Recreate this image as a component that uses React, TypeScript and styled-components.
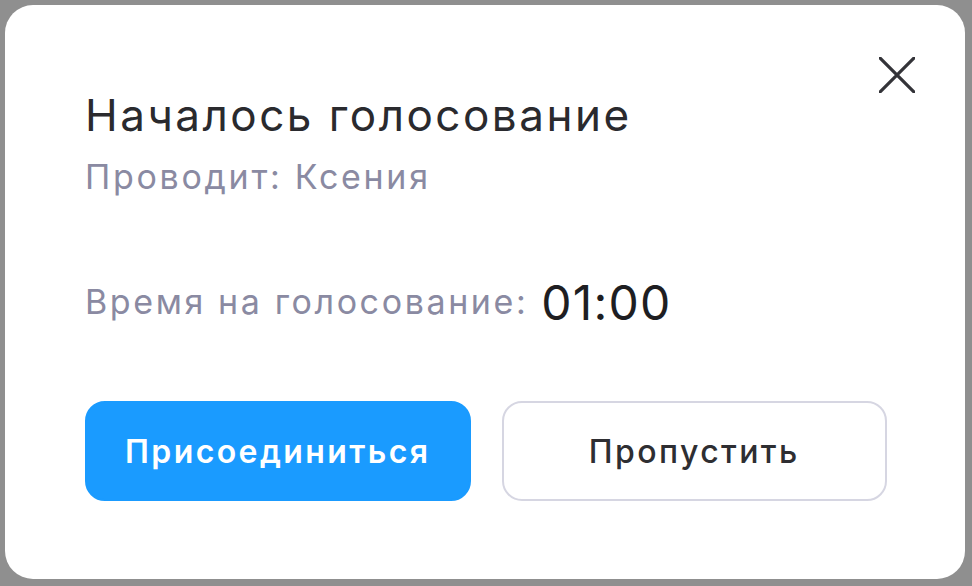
import React from 'react';
import styled, { createGlobalStyle } from 'styled-components';

const GlobalStyle = createGlobalStyle`
  html, body {
    margin: 0;
    padding: 0;
    background: #8f8f8f;
  }
  body {
    font-family: Inter, 'Noto Sans', sans-serif;
  }
  * {
    box-sizing: border-box;
  }
`;

const Backdrop = styled.div`
  width: 972px;
  height: 586px;
  padding: 5px 7px 7px 5px;
`;

const Card = styled.div`
  position: relative;
  display: flex;
  flex-direction: column;
  width: 960px;
  height: 574px;
  padding: 84px 78px 78px 80px;
  border-radius: 28px;
  background: #fff;
`;

const CloseButton = styled.button`
  position: absolute;
  top: 46px;
  right: 44px;
  width: 48px;
  height: 48px;
  padding: 0;
  border: none;
  background: transparent;
  display: flex;
  align-items: center;
  justify-content: center;
  cursor: pointer;
`;

const Title = styled.h2`
  margin: 0;
  font-size: 44px;
  line-height: 52px;
  font-weight: 400;
  letter-spacing: 2.5px;
  color: #2a2a2e;
`;

const Subtitle = styled.div`
  margin-top: 16px;
  font-size: 34px;
  line-height: 40px;
  letter-spacing: 2.7px;
  color: #8a8aa2;
`;

const TimeRow = styled.div`
  display: flex;
  align-items: center;
  gap: 13px;
  margin-top: 77px;
`;

const TimeLabel = styled.span`
  font-size: 34px;
  line-height: 40px;
  letter-spacing: 2.6px;
  color: #8a8aa2;
`;

const TimeValue = styled.span`
  font-size: 48px;
  line-height: 56px;
  letter-spacing: 1.2px;
  color: #1e1e22;
  position: relative;
  top: 1px;
`;

const Actions = styled.div`
  display: grid;
  grid-template-columns: 1fr 1fr;
  gap: 31px;
  margin-top: auto;
`;

const Button = styled.button<{ $primary?: boolean }>`
  height: 100px;
  border-radius: 20px;
  font-family: Inter, 'Noto Sans', sans-serif;
  font-size: 32px;
  letter-spacing: 2.4px;
  cursor: pointer;
  border: 2px solid ${(p) => (p.$primary ? '#1a9bff' : '#d6d6e2')};
  background: ${(p) => (p.$primary ? '#1a9bff' : '#fff')};
  color: ${(p) => (p.$primary ? '#fff' : '#2e2e32')};
  font-weight: ${(p) => (p.$primary ? 600 : 500)};
`;

const CloseIcon = () => (
  <svg width="36" height="36" viewBox="0 0 36 36" fill="none">
    <path d="M1 1L35 35M35 1L1 35" stroke="#333338" strokeWidth="3.2" strokeLinecap="round" />
  </svg>
);

const App = () => {
  return (
    <>
      <GlobalStyle />
      <Backdrop>
        <Card>
          <CloseButton aria-label="Закрыть">
            <CloseIcon />
          </CloseButton>
          <Title>Началось голосование</Title>
          <Subtitle>Проводит: Ксения</Subtitle>
          <TimeRow>
            <TimeLabel>Время на голосование:</TimeLabel>
            <TimeValue>01:00</TimeValue>
          </TimeRow>
          <Actions>
            <Button $primary>Присоединиться</Button>
            <Button>Пропустить</Button>
          </Actions>
        </Card>
      </Backdrop>
    </>
  );
};

export default App;
